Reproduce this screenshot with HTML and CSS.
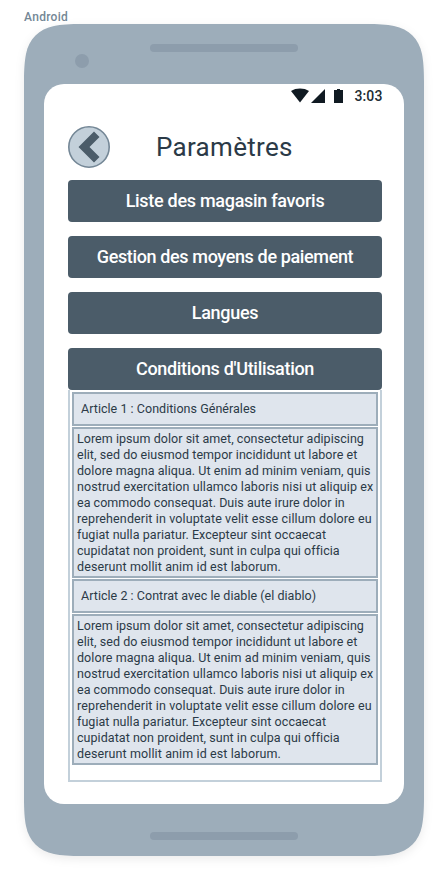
FILE: index.html
```html
<!DOCTYPE html>
<html lang="fr">
<head>
<meta charset="utf-8">
<title>Paramètres</title>
<link rel="stylesheet" href="styles.css">
</head>
<body>
<div class="label">Android</div>
<main class="device">
  <svg class="shell" width="400" height="832" viewBox="0 0 400 832">
    <path d="M0 58C0 46 .6 37 2 30C5 15 15 5 30 2C37 .6 46 0 58 0H342C354 0 363 .6 370 2C385 5 395 15 398 30C399.400 37 400 46 400 58V774C400 786 399.400 795 398 802C395 817 385 827 370 830C363 831.400 354 832 342 832H58C46 832 37 831.400 30 830C15 827 5 817 2 802C.6 795 0 786 0 774Z" fill="#9dadba"/>
    <circle cx="58" cy="37" r="7" fill="#8d9dac"/>
    <rect x="126" y="20" width="148" height="8" rx="4" fill="#8d9dac"/>
    <rect x="126" y="808" width="148" height="8" rx="4" fill="#8d9dac"/>
  </svg>
  <section class="screen">
    <div class="status">
      <svg width="56" height="16" viewBox="0 0 56 16" fill="#101a22">
        <path d="M0 3C5-.3 13-.3 18 3L9 14.500Z"/>
        <path d="M20 15L34 1V15Z"/>
        <path d="M43 2H46V1H49V2H52V15H43Z"/>
      </svg>
      <span class="time">3:03</span>
    </div>
    <header class="header">
      <svg class="back" width="42" height="42" viewBox="0 0 42 42">
        <circle cx="21" cy="21" r="20.200" fill="#c3d0da" stroke="#748796" stroke-width="1.600"/>
        <path d="M26 5.500L31.500 11L21.500 21L31.500 31L26 36.500L10.500 21Z" fill="#4b5c69"/>
      </svg>
      <h1 class="title">Paramètres</h1>
    </header>
    <nav class="menu">
      <div class="button"><span class="b1">Liste des magasin favoris</span></div>
      <div class="button"><span class="b2">Gestion des moyens de paiement</span></div>
      <div class="button"><span class="b3">Langues</span></div>
      <div class="button"><span class="b4">Conditions d'Utilisation</span></div>
    </nav>
    <div class="panel">
      <h2 class="article"><span class="a1">Article 1 : Conditions Générales</span></h2>
      <p class="text">
        <span class="l1">Lorem ipsum dolor sit amet, consectetur adipiscing</span>
        <span class="l2">elit, sed do eiusmod tempor incididunt ut labore et</span>
        <span class="l3">dolore magna aliqua. Ut enim ad minim veniam, quis</span>
        <span class="l4">nostrud exercitation ullamco laboris nisi ut aliquip ex</span>
        <span class="l5">ea commodo consequat. Duis aute irure dolor in</span>
        <span class="l6">reprehenderit in voluptate velit esse cillum dolore eu</span>
        <span class="l7">fugiat nulla pariatur. Excepteur sint occaecat</span>
        <span class="l8">cupidatat non proident, sunt in culpa qui officia</span>
        <span class="l9">deserunt mollit anim id est laborum.</span>
      </p>
      <h2 class="article"><span class="a2">Article 2 : Contrat avec le diable (el diablo)</span></h2>
      <p class="text">
        <span class="l1">Lorem ipsum dolor sit amet, consectetur adipiscing</span>
        <span class="l2">elit, sed do eiusmod tempor incididunt ut labore et</span>
        <span class="l3">dolore magna aliqua. Ut enim ad minim veniam, quis</span>
        <span class="l4">nostrud exercitation ullamco laboris nisi ut aliquip ex</span>
        <span class="l5">ea commodo consequat. Duis aute irure dolor in</span>
        <span class="l6">reprehenderit in voluptate velit esse cillum dolore eu</span>
        <span class="l7">fugiat nulla pariatur. Excepteur sint occaecat</span>
        <span class="l8">cupidatat non proident, sunt in culpa qui officia</span>
        <span class="l9">deserunt mollit anim id est laborum.</span>
      </p>
    </div>
  </section>
</main>
</body>
</html>
```
FILE: styles.css
```css
* { box-sizing: border-box; }
body {
  margin: 0;
  width: 448px;
  height: 880px;
  padding: 9px 24px 0;
  background: #fff;
  color: #2b3a47;
  font-family: Roboto, "Liberation Sans", sans-serif;
}
.label {
  height: 15px;
  font-size: 12px;
  line-height: 16px;
  font-weight: 500;
  color: #748796;
  letter-spacing: .3px;
}
.device {
  position: relative;
  width: 400px;
  height: 832px;
  padding: 60px 20px 52px;
}
.shell {
  position: absolute;
  left: 0;
  top: 0;
  overflow: visible;
  filter: drop-shadow(0 3px 5px rgba(0, 0, 0, .08));
}
.screen {
  position: relative;
  height: 720px;
  padding: 0 22px 0 24px;
  border-radius: 20px;
  background: #fff;
}
.status {
  display: flex;
  justify-content: flex-end;
  height: 42px;
  padding-top: 4px;
}
.time {
  width: 35px;
  padding-left: 7.5px;
  line-height: 17px;
  font-size: 14px;
  font-weight: 500;
  color: #222c34;
  white-space: nowrap;
  letter-spacing: .1px;
}
.header { display: flex; height: 54px; }
.title {
  margin: 0;
  padding-left: 46px;
  font-size: 26px;
  line-height: 42px;
  font-weight: 400;
  letter-spacing: .3px;
}
.menu { display: grid; gap: 14px; }
.button {
  height: 42px;
  border-radius: 4px;
  background: #4b5c69;
  color: #fff;
  font-size: 18px;
  font-weight: 500;
  line-height: 42px;
  text-align: center;
  white-space: nowrap;
}
.b1 { letter-spacing: -.29px; }
.b2 { letter-spacing: -.37px; }
.b3 { letter-spacing: -.3px; }
.b4 { letter-spacing: -.32px; }
.panel {
  display: flex;
  flex-direction: column;
  gap: 1px;
  height: 392px;
  padding: 2px;
  border: 2px solid #c3d0da;
  border-top: 0;
}
.article, .text {
  margin: 0;
  border: 2px solid #9dadba;
  background: #dfe5ed;
  font-weight: 400;
  font-size: 12.5px;
  white-space: nowrap;
}
.article { height: 34px; padding-left: 7px; line-height: 29px; letter-spacing: .035px; }
.text { height: 151px; padding: 2px 0 0 3px; line-height: 16px; }
.text span { display: block; }
.l1 { letter-spacing: .045px; }
.l2 { letter-spacing: .055px; }
.l3 { letter-spacing: .07px; }
.l4 { letter-spacing: .08px; }
.l5 { letter-spacing: .03px; }
.l6 { letter-spacing: .12px; }
.l7 { letter-spacing: .05px; }
.l8 { letter-spacing: .05px; }
.l9 { letter-spacing: .11px; }
```
